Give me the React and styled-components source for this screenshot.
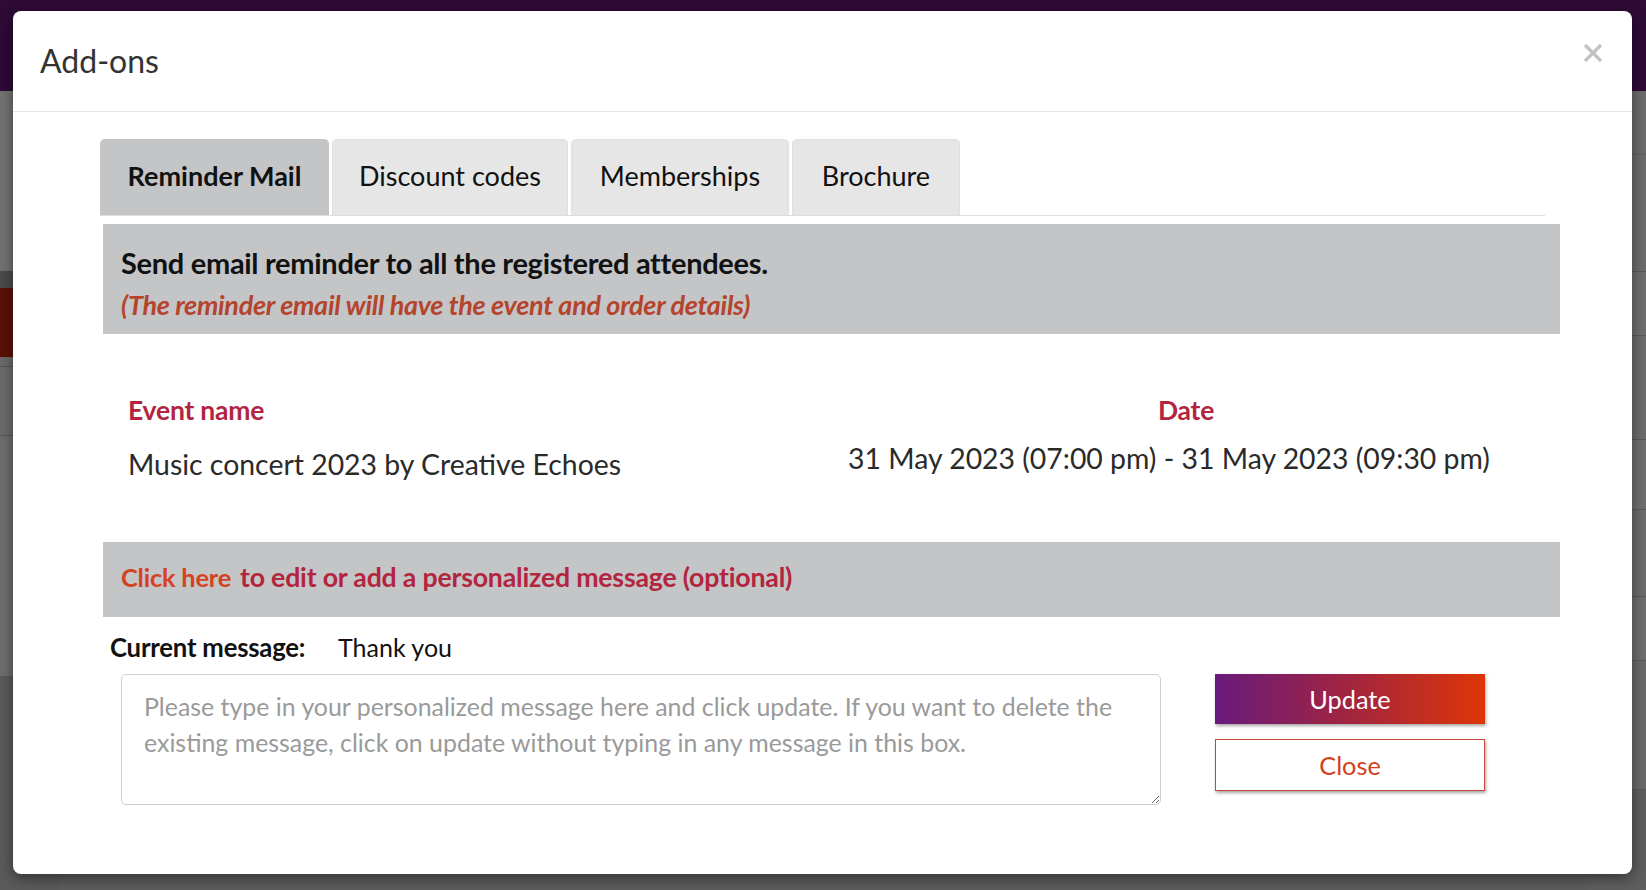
import React from "react";
import styled, { createGlobalStyle } from "styled-components";

const GlobalStyle = createGlobalStyle`
  html, body {
    margin: 0;
    padding: 0;
    height: 100%;
    overflow: hidden;
  }
  body {
    font-family: Lato, "Open Sans", "Liberation Sans", sans-serif;
    background: #5e5e5e;
  }
  * { box-sizing: border-box; }
`;

// the page behind the dimmed overlay
const Page = styled.div`
  position: relative;
  width: 1646px;
  height: 890px;
  display: flex;
  flex-direction: column;
  background: #5c5c5c;
`;

const PageTop = styled.div`
  height: 91px;
  flex-shrink: 0;
  background: #2e0a35;
`;

const PageMain = styled.div`
  flex: 1;
  display: flex;
  justify-content: space-between;
`;

const Rail = styled.div`
  width: 60px;
  display: flex;
  flex-direction: column;
  background: ${(p) => p.$bg};
`;

const RailRow = styled.div`
  height: ${(p) => p.$h}px;
  flex-shrink: 0;
  background: ${(p) => p.$bg || "transparent"};
  border-bottom: ${(p) => (p.$line ? `1px solid ${p.$line}` : "0")};
`;

const Modal = styled.div`
  position: absolute;
  top: 11px;
  left: 13px;
  width: 1619px;
  height: 863px;
  background: #fff;
  border-radius: 8px;
  box-shadow: 0 4px 14px rgba(0, 0, 0, 0.45);
  display: flex;
  flex-direction: column;
`;

const Header = styled.div`
  height: 101px;
  border-bottom: 1px solid #e5e5e5;
  display: flex;
  align-items: center;
  justify-content: space-between;
  padding: 0 28px 2px 27px;
`;

const Title = styled.h4`
  margin: 0;
  font-size: 32px;
  font-weight: 400;
  color: #333;
`;

const CloseX = styled.button`
  border: 0;
  background: none;
  padding: 0;
  width: 22px;
  height: 22px;
  cursor: pointer;
  margin-bottom: 14px;
`;

const Body = styled.div`
  padding: 27px 72px 0 87px;
`;

const TabBar = styled.div`
  display: flex;
  gap: 3px;
  height: 77px;
  border-bottom: 1px solid #dedede;
  margin-right: 15px;
`;

const Tab = styled.button`
  height: 76px;
  padding: 0 24px 4px 24px;
  min-width: ${(p) => p.$w}px;
  border: 1px solid ${(p) => (p.$active ? "#c4c5c7" : "#e0e0e0")};
  border-bottom: 0;
  border-radius: 5px 5px 0 0;
  background: ${(p) => (p.$active ? "#c4c5c7" : "#e6e6e6")};
  font-family: Lato, sans-serif;
  font-size: 27px;
  font-weight: ${(p) => (p.$active ? 700 : 400)};
  color: #111;
  cursor: pointer;
`;

const Panel = styled.div`
  margin: 8px 0 0 3px;
  display: flex;
  flex-direction: column;
`;

const GreyBox = styled.div`
  background: #c4c5c7;
  padding: ${(p) => p.$pad};
  display: flex;
  flex-direction: column;
`;

const Lead = styled.div`
  font-size: 29px;
  line-height: 35px;
  font-weight: 700;
  color: #111;
  letter-spacing: -0.3px;
`;

const Note = styled.div`
  font-size: 27px;
  line-height: 32px;
  font-weight: 700;
  font-style: italic;
  color: #b4442c;
  margin-top: 9px;
  letter-spacing: -0.3px;
`;

const EventGrid = styled.div`
  display: grid;
  grid-template-columns: 698px 720px;
  grid-template-rows: auto auto;
  padding: 60px 0 61px 25px;
  row-gap: 15px;
`;

const ColHead = styled.div`
  font-size: 26.5px;
  line-height: 32px;
  font-weight: 700;
  color: #b3253f;
  letter-spacing: -0.2px;
  text-align: ${(p) => p.$align || "left"};
`;

const ColValue = styled.div`
  font-size: 28.4px;
  line-height: 34px;
  color: #2a2a2a;
  text-align: ${(p) => p.$align || "left"};
  padding-right: ${(p) => p.$pr || 0}px;
  margin-top: ${(p) => p.$mt || 0}px;
`;

const LinkLine = styled.div`
  font-size: 26.7px;
  line-height: 32px;
  font-weight: 700;
  color: #b3253f;
  letter-spacing: -0.2px;
`;

const ClickHere = styled.a`
  font-size: 25.4px;
  color: #d5421f;
  text-decoration: none;
  margin-right: 9px;
  cursor: pointer;
`;

const CurrentRow = styled.div`
  display: flex;
  align-items: center;
  padding: 15px 0 0 7px;
  font-size: 25px;
  line-height: 30px;
  color: #111;
`;

const CurrentLabel = styled.span`
  font-weight: 700;
  font-size: 25.7px;
  width: 228px;
  letter-spacing: -0.2px;
`;

const EditRow = styled.div`
  display: flex;
  align-items: flex-start;
  padding: 12px 0 0 18px;
  gap: 54px;
`;

const MessageBox = styled.textarea`
  width: 1040px;
  height: 131px;
  border: 1px solid #cfcfcf;
  border-radius: 5px;
  padding: 13px 22px;
  font-family: Lato, sans-serif;
  font-size: 24.9px;
  line-height: 36px;
  color: #333;
  resize: vertical;
  outline: none;
  &::placeholder {
    color: #9a9a9a;
  }
`;

const Actions = styled.div`
  display: flex;
  flex-direction: column;
  gap: 15px;
`;

const Button = styled.button`
  width: 270px;
  height: ${(p) => (p.$primary ? 50 : 52)}px;
  font-family: Lato, sans-serif;
  font-size: 25.3px;
  cursor: pointer;
  box-shadow: 1px 2px 3px rgba(0, 0, 0, 0.35);
  background: ${(p) =>
    p.$primary
      ? "linear-gradient(90deg, #681a7c 0%, #a2253f 50%, #de3507 100%)"
      : "#fff"};
  color: ${(p) => (p.$primary ? "#fff" : "#d3401c")};
  border: ${(p) => (p.$primary ? "0" : "1px solid #c8463a")};
`;

const tabs = [
  { label: "Reminder Mail", w: 229 },
  { label: "Discount codes", w: 236 },
  { label: "Memberships", w: 218 },
  { label: "Brochure", w: 168 },
];

const leftRows = [
  { h: 180, bg: "#727272" },
  { h: 17, bg: "#4a4a4a" },
  { h: 69, bg: "#5c1007" },
  { h: 10, bg: "#6a6a6a", line: "#555" },
  { h: 69, bg: "#6c6c6c", line: "#555" },
  { h: 240, bg: "#6e6e6e" },
];

const rightRows = [
  { h: 64, bg: "#6c6c6c", line: "#606060" },
  { h: 117, bg: "#6c6c6c", line: "#5a5a5a" },
  { h: 64, bg: "#6e6e6e", line: "#5a5a5a" },
  { h: 104, bg: "#6c6c6c", line: "#5a5a5a" },
  { h: 70, bg: "#6e6e6e", line: "#5a5a5a" },
  { h: 87, bg: "#6c6c6c", line: "#5a5a5a" },
  { h: 64, bg: "#6e6e6e", line: "#5a5a5a" },
  { h: 129, bg: "#6a6a6a", line: "#5a5a5a" },
];

export default function App() {
  return (
    <>
      <GlobalStyle />
      <Page>
        <PageTop />
        <PageMain>
          <Rail $bg="#5a5a5a">
            {leftRows.map((r, i) => (
              <RailRow key={i} $h={r.h} $bg={r.bg} $line={r.line} />
            ))}
          </Rail>
          <Rail $bg="#5e5e5e">
            {rightRows.map((r, i) => (
              <RailRow key={i} $h={r.h} $bg={r.bg} $line={r.line} />
            ))}
          </Rail>
        </PageMain>
        <Modal>
          <Header>
            <Title>Add-ons</Title>
            <CloseX aria-label="close">
              <svg width="22" height="22" viewBox="0 0 22 22">
                <path d="M3 3 L19 19 M19 3 L3 19" stroke="#c2c2c2" strokeWidth="3.2" strokeLinecap="butt" />
              </svg>
            </CloseX>
          </Header>
          <Body>
            <TabBar>
              {tabs.map((t, i) => (
                <Tab key={t.label} $active={i === 0} $w={t.w}>
                  {t.label}
                </Tab>
              ))}
            </TabBar>
            <Panel>
              <GreyBox $pad="21px 18px 13px 18px">
                <Lead>Send email reminder to all the registered attendees.</Lead>
                <Note>(The reminder email will have the event and order details)</Note>
              </GreyBox>
              <EventGrid>
                <ColHead>Event name</ColHead>
                <ColHead $align="center">Date</ColHead>
                <ColValue $mt={6}>Music concert 2023 by Creative Echoes</ColValue>
                <ColValue $align="center" $pr={34}>
                  31 May 2023 (07:00 pm) - 31 May 2023 (09:30 pm)
                </ColValue>
              </EventGrid>
              <GreyBox $pad="19px 18px 24px 18px">
                <LinkLine>
                  <ClickHere>Click here</ClickHere>
                  to edit or add a personalized message (optional)
                </LinkLine>
              </GreyBox>
              <CurrentRow>
                <CurrentLabel>Current message:</CurrentLabel>
                <span>Thank you</span>
              </CurrentRow>
              <EditRow>
                <MessageBox placeholder="Please type in your personalized message here and click update. If you want to delete the existing message, click on update without typing in any message in this box." />
                <Actions>
                  <Button $primary>Update</Button>
                  <Button>Close</Button>
                </Actions>
              </EditRow>
            </Panel>
          </Body>
        </Modal>
      </Page>
    </>
  );
}
